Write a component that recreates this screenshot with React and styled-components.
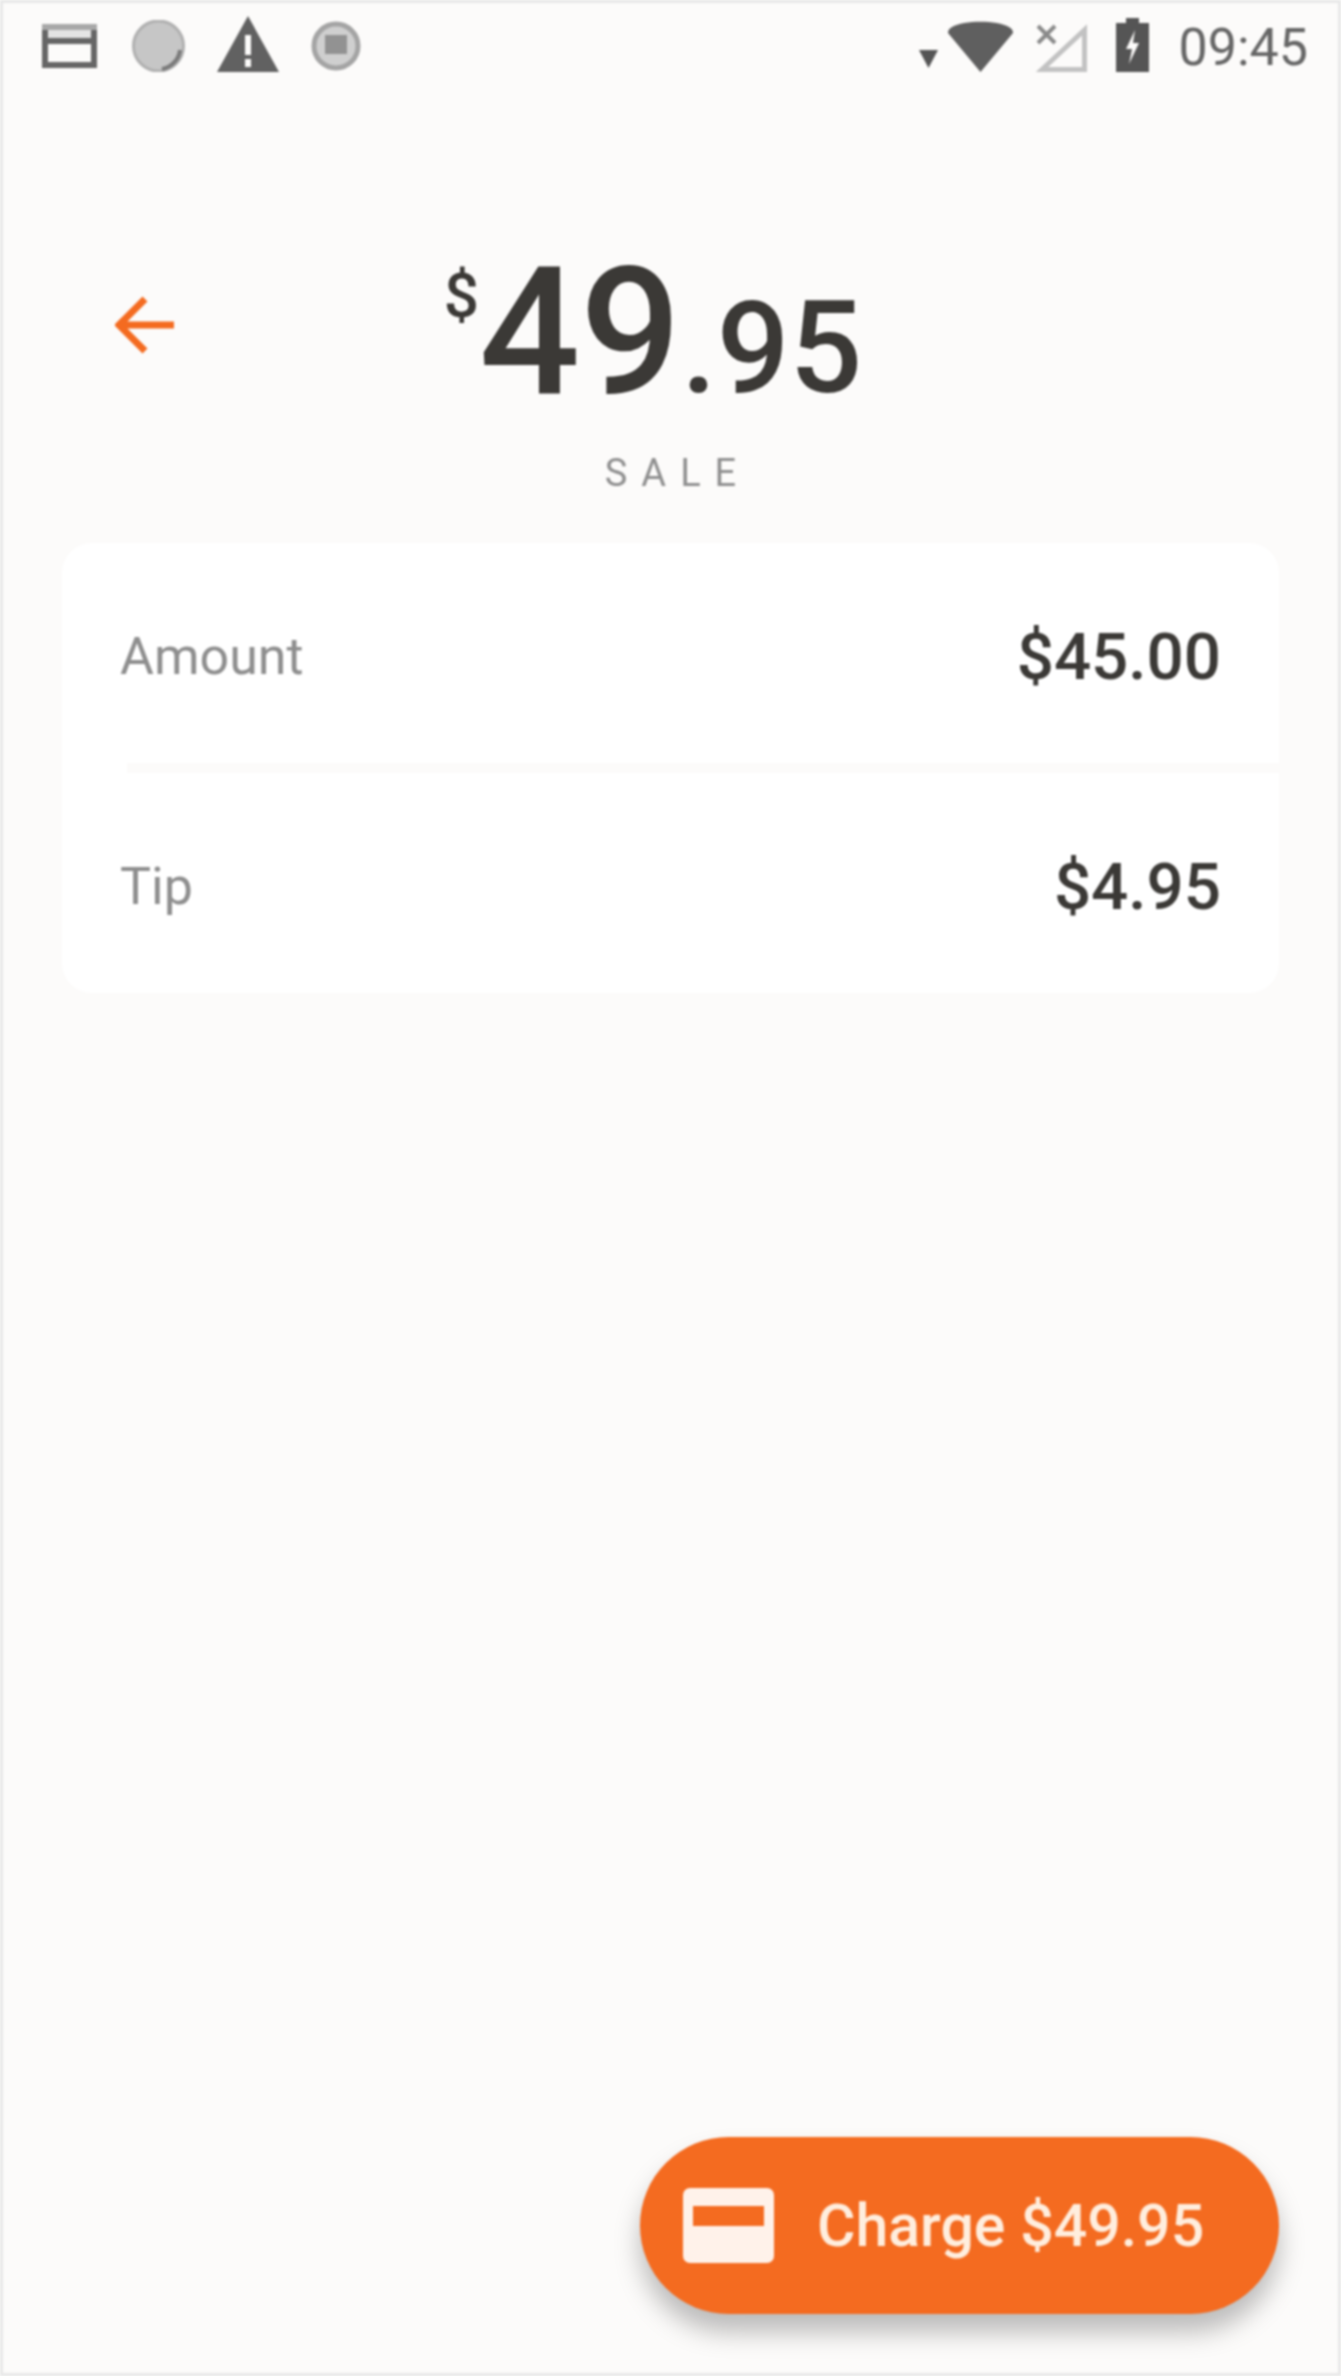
import React from "react";
import styled, { createGlobalStyle } from "styled-components";

const GlobalStyle = createGlobalStyle`
  html, body {
    margin: 0;
    padding: 0;
    background: #fcfbfa;
  }
  * {
    box-sizing: border-box;
  }
`;

const Screen = styled.div`
  width: 1341px;
  height: 2376px;
  display: flex;
  flex-direction: column;
  border: 3px solid #e8e8e8;
  background: #fcfbfa;
  font-family: Roboto, "Liberation Sans", sans-serif;
  overflow: hidden;
  filter: blur(0.9px);
`;

const StatusBar = styled.div`
  height: 73px;
  padding: 13px 30px 0 39px;
  display: flex;
  justify-content: space-between;
  align-items: flex-start;
`;

const StatusGroup = styled.div`
  display: flex;
  align-items: flex-start;
`;

const StatusIcon = styled.svg`
  display: block;
  flex: none;
  margin-left: ${(p) => p.$gap || 0}px;
  margin-top: ${(p) => p.$top || 0}px;
`;

const Clock = styled.span`
  margin-left: 30px;
  margin-top: 2px;
  font-size: 52px;
  line-height: 60px;
  color: #666;
`;

const Header = styled.div`
  margin-top: 192px;
  display: grid;
  grid-template-columns: 1fr auto 1fr;
  padding: 0 0 0 112px;
`;

const BackArrow = styled.svg`
  display: block;
  margin-top: 28px;
`;

const Total = styled.div`
  display: flex;
  align-items: flex-start;
  margin-right: 147px;
  color: #3b3936;
  font-weight: 500;
  height: 144px;
`;

const Currency = styled.span`
  font-size: 62px;
  font-weight: 500;
  line-height: 68px;
  margin-top: -6px;
`;

const Dollars = styled.span`
  font-size: 178px;
  line-height: 160px;
  margin-top: -16px;
`;

const Cents = styled.span`
  font-size: 128px;
  line-height: 150px;
  margin-top: 5px;
`;

const Kind = styled.div`
  margin-top: 39px;
  text-align: center;
  font-size: 38px;
  line-height: 44px;
  letter-spacing: 14px;
  padding-left: 14px;
  color: #8f8f8f;
`;

const Card = styled.div`
  margin: 48px 59px 0 59px;
  height: 450px;
  background: #fff;
  border-radius: 30px;
  display: flex;
  flex-direction: column;
  overflow: hidden;
`;

const Row = styled.div`
  flex: 1;
  padding: 6px 58px 0 58px;
  display: flex;
  align-items: center;
  justify-content: space-between;
`;

const Divider = styled.div`
  height: 10px;
  margin-left: 65px;
  background: #fcfbfa;
`;

const Label = styled.span`
  font-size: 52px;
  color: #8e8e8e;
`;

const Value = styled.span`
  font-size: 65.5px;
  font-weight: 500;
  color: #3b3936;
`;

const ChargeButton = styled.button`
  margin: auto 59px 59px 0;
  align-self: flex-end;
  width: 639px;
  height: 177px;
  border: 0;
  border-radius: 89px;
  background: #f46b20;
  box-shadow: 0 18px 26px rgba(0, 0, 0, 0.26);
  display: flex;
  align-items: center;
  padding: 0 0 0 43px;
  color: #ffeede;
  font-family: inherit;
  font-size: 59px;
  font-weight: 500;
`;

const CardGlyph = styled.svg`
  display: block;
  flex: none;
  margin-right: 43px;
`;

export default function App() {
  return (
    <Screen>
      <GlobalStyle />
      <StatusBar>
        <StatusGroup>
          <StatusIcon width="55" height="44" viewBox="0 0 55 44" $top={8}>
            <path fill="#666" fillRule="evenodd" d="M0 6h55v38H0zM6 6v8h43V6zM6 20v18h43V20z" />
            <path fill="#a8a8a8" d="M0 0h55v6H0z" />
            <path fill="#e4e4e4" d="M6 6h43v8H6z" />
          </StatusIcon>
          <StatusIcon width="53" height="52" viewBox="0 0 53 52" $gap={35} $top={4}>
            <circle cx="26.500" cy="26" r="25" fill="#c6c6c6" stroke="#b0b0b0" strokeWidth="3" />
            <path d="M48 30a22 22 0 0 1-18 19" fill="none" stroke="#7a7a7a" strokeWidth="4" />
          </StatusIcon>
          <StatusIcon width="62" height="56" viewBox="0 0 62 56" $gap={32}>
            <path fill="#616161" fillRule="evenodd" d="M31 0 62 56H0zM28 19v20h6V19zM28 43v8h6v-8z" />
          </StatusIcon>
          <StatusIcon width="52" height="52" viewBox="0 0 52 52" $gap={31} $top={4}>
            <circle cx="26" cy="26" r="22" fill="#cfcfcf" stroke="#a4a4a4" strokeWidth="5" />
            <rect x="15" y="15" width="22" height="19" fill="#929292" />
          </StatusIcon>
        </StatusGroup>
        <StatusGroup>
          <StatusIcon width="19" height="18" viewBox="0 0 19 18" $top={34}>
            <path fill="#555" d="M0 0h19L9.500 18z" />
          </StatusIcon>
          <StatusIcon width="65" height="52" viewBox="0 0 65 52" $gap={10} $top={4}>
            <path fill="#5f5f5f" d="M0 13Q0 9 4 7C16 0 49 0 61 7Q65 9 65 13L32.500 52z" />
          </StatusIcon>
          <StatusIcon width="51" height="48" viewBox="0 0 51 48" $gap={23} $top={8}>
            <path fill="none" stroke="#c2c2c2" strokeWidth="5" d="M48.500 6V45.500H6z" />
            <path fill="none" stroke="#8a8a8a" strokeWidth="4" d="M2 2 19 19M19 2 2 19" />
          </StatusIcon>
          <StatusIcon width="33" height="54" viewBox="0 0 33 54" $gap={29} $top={2}>
            <path fill="#555" fillRule="evenodd" d="M10 0h13v5h10v49H0V5h10zM19 12 10 31h6l-3 15 10-21h-6z" />
          </StatusIcon>
          <Clock>09:45</Clock>
        </StatusGroup>
      </StatusBar>
      <Header>
        <BackArrow width="60" height="58" viewBox="0 0 60 58">
          <path fill="none" stroke="#f46b20" strokeWidth="7" d="M59 29H5M30 3 4 29l26 26" />
        </BackArrow>
        <Total>
          <Currency>$</Currency>
          <Dollars>49</Dollars>
          <Cents>.95</Cents>
        </Total>
      </Header>
      <Kind>SALE</Kind>
      <Card>
        <Row>
          <Label>Amount</Label>
          <Value>$45.00</Value>
        </Row>
        <Divider />
        <Row>
          <Label>Tip</Label>
          <Value>$4.95</Value>
        </Row>
      </Card>
      <ChargeButton>
        <CardGlyph width="91" height="75" viewBox="0 0 91 75">
          <rect width="91" height="75" rx="7" fill="#fff2ea" />
          <rect x="10" y="18" width="71" height="20" fill="#f46b20" />
        </CardGlyph>
        Charge $49.95
      </ChargeButton>
    </Screen>
  );
}
